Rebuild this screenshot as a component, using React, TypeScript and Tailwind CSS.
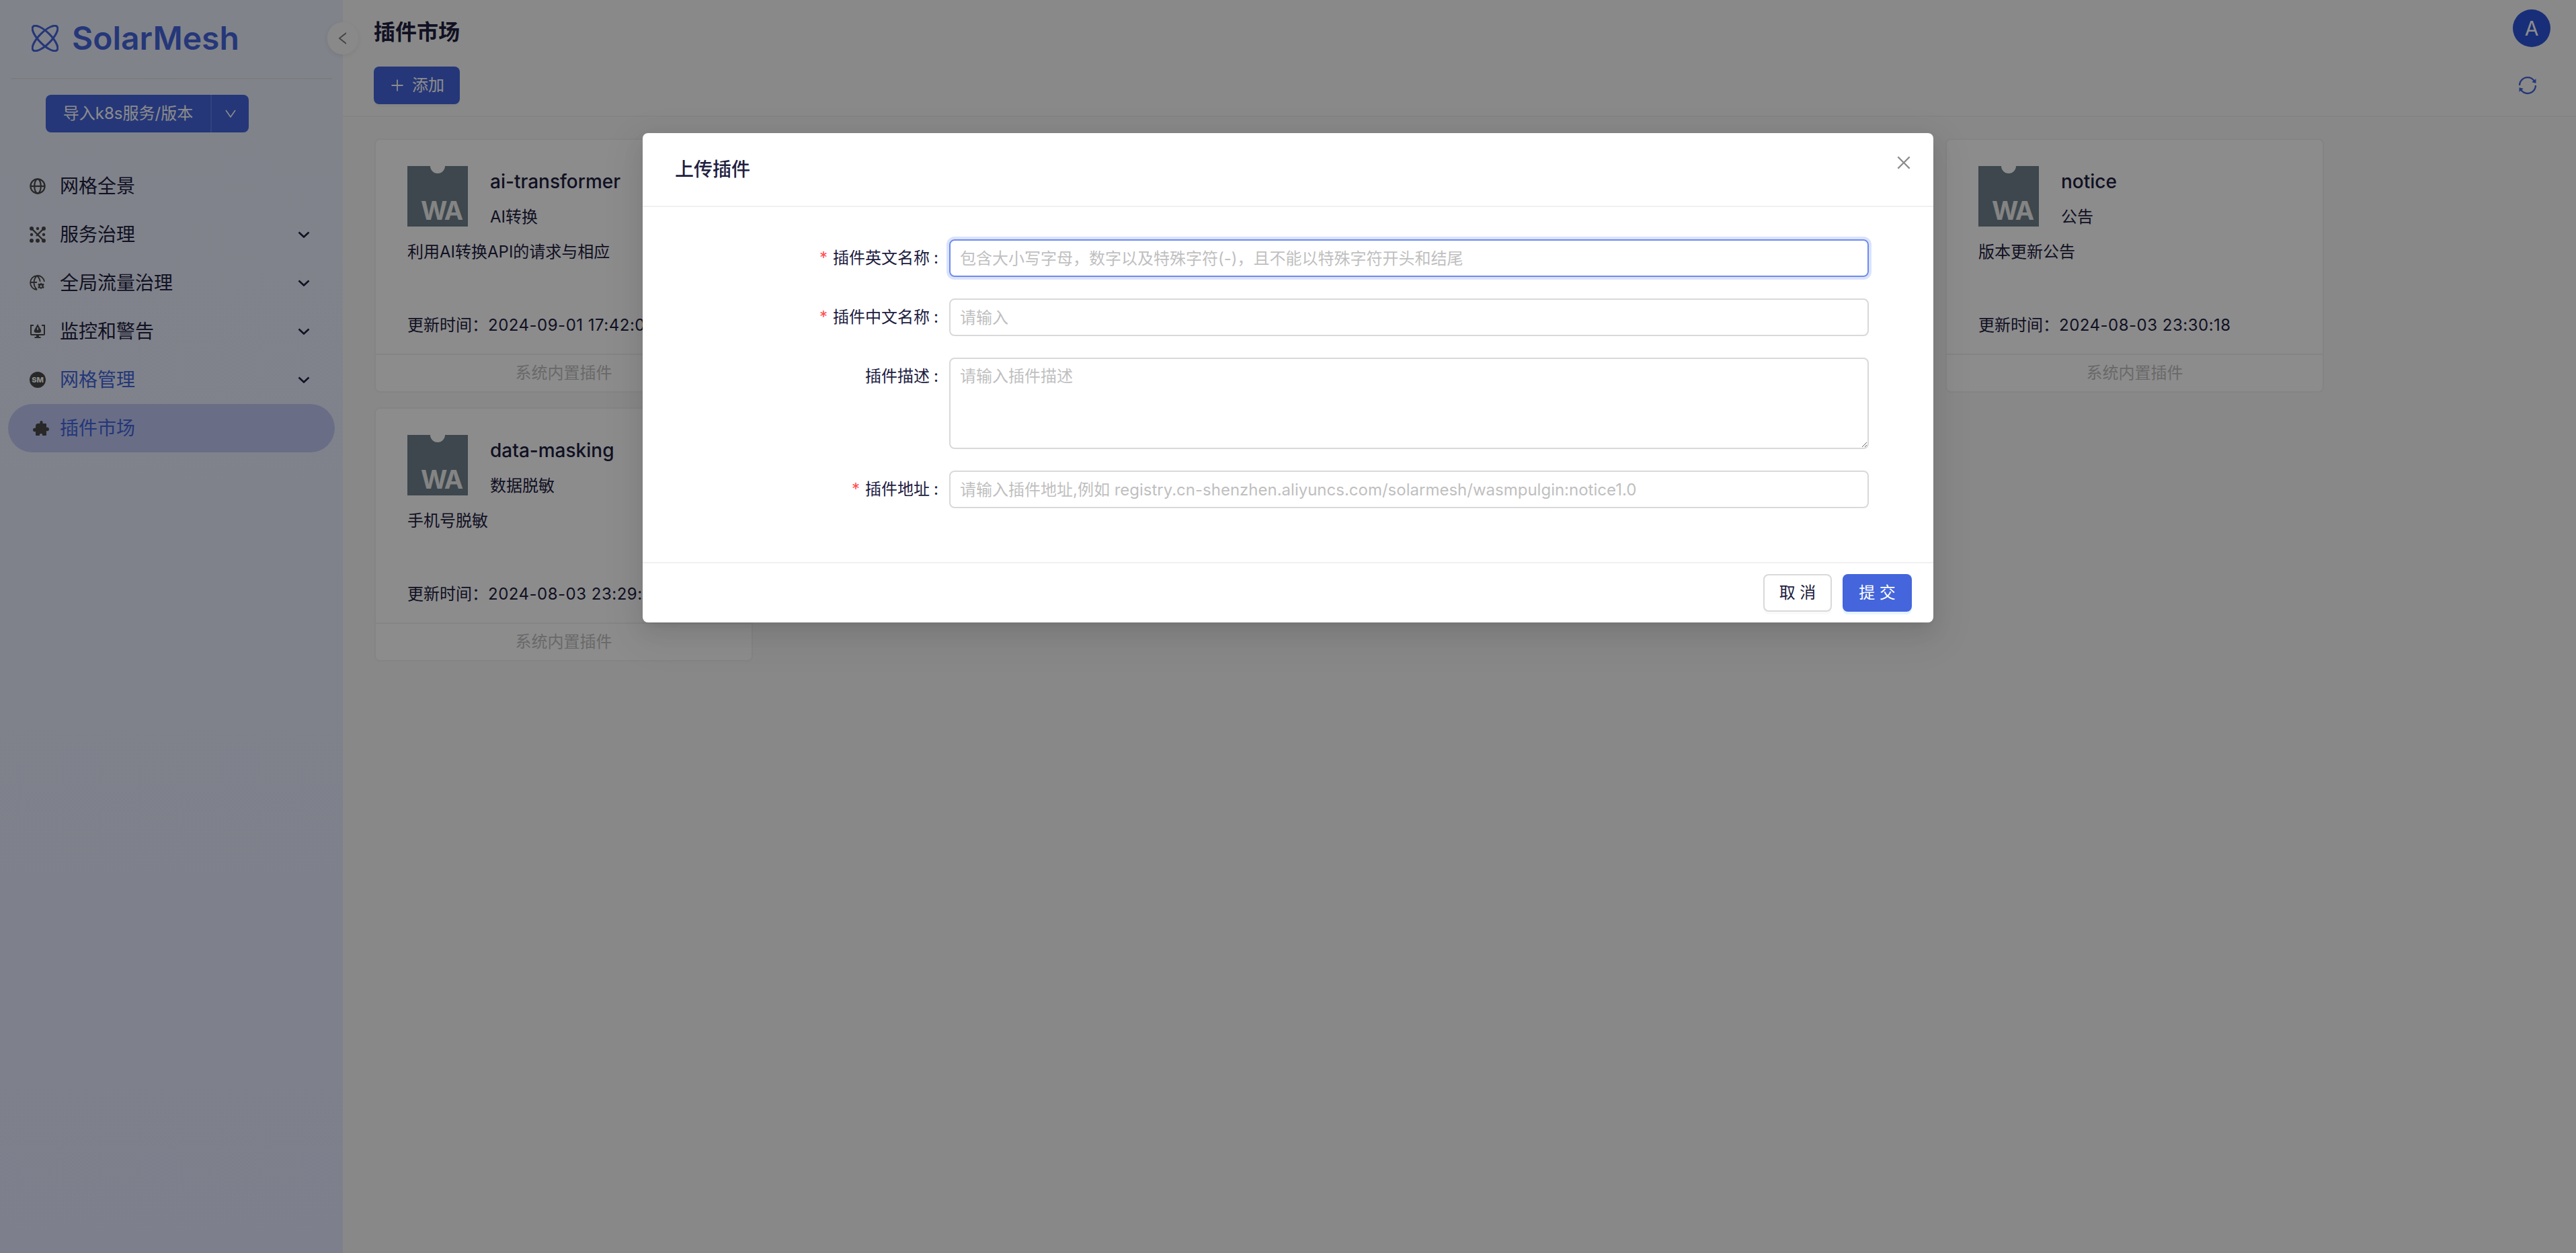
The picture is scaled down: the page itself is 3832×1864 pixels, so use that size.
/**
 * Plugin market page with the upload-plugin modal open over it.
 */
import type { ReactNode } from 'react'
import { AiOutlineClose, AiOutlineLeft, AiOutlinePlus, AiOutlineSync } from 'react-icons/ai'

const NAV = [
  { label: '网格全景', icon: <GlobeIcon /> },
  { label: '服务治理', icon: <ServiceIcon />, more: true },
  { label: '全局流量治理', icon: <TrafficIcon />, more: true },
  { label: '监控和警告', icon: <MonitorIcon />, more: true },
  { label: '网格管理', icon: <MeshIcon />, more: true, open: true },
  { label: '插件市场', icon: <PuzzleIcon />, active: true },
]

export default function App() {
  return (
    <div className="relative flex h-[1864px] w-full overflow-hidden bg-[#f7f7f7] font-['Inter','Noto_Sans_CJK_SC',sans-serif] text-[24px] text-[#20203f]">
      <Sidebar />

      <main className="min-w-0 flex-1">
        <header className="h-[174px] border-b-2 border-[#f0f0f0] bg-[#fafafa] pl-[46px] pr-[38px]">
          <div className="flex items-start justify-between pt-[14px]">
            <h1 className="mt-[14px] text-[32px] font-semibold leading-[40px]">插件市场</h1>
            <div className="grid h-14 w-14 place-items-center rounded-full bg-[#2d54da] text-[30px] text-white">A</div>
          </div>
          <div className="mt-[29px] flex items-center justify-between pr-[18px]">
            <button
              type="button"
              className="flex h-14 w-32 items-center justify-center gap-[10px] rounded-lg bg-[#4465dc] text-white shadow-[0_4px_0_rgba(0,0,0,0.02)]"
            >
              <AiOutlinePlus size={24} />
              添加
            </button>
            <AiOutlineSync size={32} className="text-[#4465dc]" />
          </div>
        </header>

        <div className="grid grid-cols-[repeat(5,563px)] gap-x-[21.25px] gap-y-[22px] pl-[47px] pt-8">
          <PluginCard name="ai-transformer" title="AI转换" desc="利用AI转换API的请求与相应" time="2024-09-01 17:42:08" />
          <div className="col-start-5">
            <PluginCard name="notice" title="公告" desc="版本更新公告" time="2024-08-03 23:30:18" />
          </div>
          <div className="col-start-1">
            <PluginCard name="data-masking" title="数据脱敏" desc="手机号脱敏" time="2024-08-03 23:29:38" />
          </div>
        </div>
      </main>

      <button
        type="button"
        className="absolute left-[487px] top-[33px] grid h-12 w-[46px] place-items-center rounded-full bg-[#fafafa] text-[#7a7a7a] shadow-[0_2px_8px_rgba(0,0,0,0.08)]"
      >
        <AiOutlineLeft size={24} />
      </button>

      <UploadModal />
    </div>
  )
}

function Sidebar() {
  return (
    <aside className="h-full w-[510px] shrink-0 bg-gradient-to-b from-[#ebeffc] to-[#e4eaff]">
      <div className="flex h-[116px] items-center gap-[20px] pb-[3px] pl-[47px]">
        <LogoIcon />
        <span className="text-[48px] font-semibold leading-none text-[#4465dc]">SolarMesh</span>
      </div>
      <div className="mx-4 border-t-2 border-[#dfe2e8]" />

      <div className="ml-[68px] mt-[23px] flex h-14 w-[302px] overflow-hidden rounded-lg bg-[#4465dc] text-white">
        <span className="flex w-[247px] items-center justify-center border-r-2 border-[#5a78e6]">导入k8s服务/版本</span>
        <span className="flex flex-1 items-center justify-center">
          <svg width="16" height="12" viewBox="0 0 16 12" fill="none" stroke="currentColor" strokeWidth="1.6">
            <path d="M1 1l7 10 7-10" />
          </svg>
        </span>
      </div>

      <nav className="mt-[44px]">
        {NAV.map((item) => (
          <div
            key={item.label}
            className={`mx-3 flex h-[72px] items-center rounded-full pl-[32px] pr-[37px] text-[28px] ${
              item.active ? 'bg-[#bfc9f5] text-[#4465dc]' : item.open ? 'text-[#4465dc]' : 'text-[#20203f]'
            }`}
          >
            <span className="mr-[21px] h-6 w-6 shrink-0 text-[#4a4a4a]">{item.icon}</span>
            <span className="flex-1">{item.label}</span>
            {item.more && (
              <svg width="18" height="10" viewBox="0 0 18 10" fill="none" stroke="#20203f" strokeWidth="2.6">
                <path d="M1.5 1.5L9 8.5l7.5-7" />
              </svg>
            )}
          </div>
        ))}
      </nav>
    </aside>
  )
}

function PluginCard({ name, title, desc, time }: { name: string; title: string; desc: string; time: string }) {
  return (
    <div className="h-[378px] rounded-lg border-2 border-[#f0f0f0] bg-white">
      <div className="flex h-[318px] flex-col px-[47px] pb-[24px] pt-[39px]">
        <div className="flex gap-[33px]">
          <WasmIcon />
          <div>
            <p className="mt-[5px] text-[28px] font-medium leading-[36px]">{name}</p>
            <p className="mt-[17px] leading-[36px]">{title}</p>
          </div>
        </div>
        <p className="mt-[16px] leading-[36px]">{desc}</p>
        <p className="mt-auto whitespace-nowrap leading-[36px]">
          更新时间：<span className="tracking-[0.5px]">{time}</span>
        </p>
      </div>
      <div className="flex h-[56px] items-center justify-center border-t-2 border-[#f0f0f0] text-[#bfbfbf]">系统内置插件</div>
    </div>
  )
}

function UploadModal() {
  return (
    <div className="absolute inset-0 flex justify-center bg-black/45 pt-[198px]">
      <div className="relative h-[728px] w-[1920px] rounded-lg bg-white shadow-[0_12px_32px_0_rgba(0,0,0,0.08),0_6px_12px_-8px_rgba(0,0,0,0.12),0_18px_56px_16px_rgba(0,0,0,0.05)]">
        <div className="flex h-[110px] items-center border-b-2 border-[#f0f0f0] pl-[48px] text-[28px] font-medium">上传插件</div>
        <AiOutlineClose size={28} className="absolute right-[30px] top-[30px] text-[#8c8c8c]" />

        <div className="flex h-[528px] flex-col gap-8 pl-[456px] pr-[96px] pt-[48px]">
          <FormRow label="插件英文名称" required>
            <input
              placeholder="包含大小写字母，数字以及特殊字符(-)，且不能以特殊字符开头和结尾"
              className="h-14 w-full rounded-lg border-2 border-[#6d8bf0] px-[14px] outline-none ring-4 ring-[#dbe3fb] placeholder:text-[#bfbfbf]"
            />
          </FormRow>
          <FormRow label="插件中文名称" required>
            <input
              placeholder="请输入"
              className="h-14 w-full rounded-lg border-2 border-[#d9d9d9] px-[14px] outline-none placeholder:text-[#bfbfbf]"
            />
          </FormRow>
          <FormRow label="插件描述">
            <textarea
              placeholder="请输入插件描述"
              className="block h-[136px] w-full resize-y rounded-lg border-2 border-[#d9d9d9] px-[14px] py-[8px] leading-[36px] outline-none placeholder:text-[#bfbfbf]"
            />
          </FormRow>
          <FormRow label="插件地址" required>
            <input
              placeholder="请输入插件地址,例如 registry.cn-shenzhen.aliyuncs.com/solarmesh/wasmpulgin:notice1.0"
              className="h-14 w-full rounded-lg border-2 border-[#d9d9d9] px-[14px] outline-none placeholder:text-[#bfbfbf]"
            />
          </FormRow>
        </div>

        <div className="flex h-[90px] items-center justify-end gap-4 border-t-2 border-[#f0f0f0] pr-8">
          <button
            type="button"
            className="h-14 w-[102px] rounded-lg border-2 border-[#d9d9d9] bg-white shadow-[0_4px_0_rgba(0,0,0,0.02)]"
          >
            取 消
          </button>
          <button type="button" className="h-14 w-[103px] rounded-lg bg-[#4465dc] text-white shadow-[0_4px_0_rgba(5,145,255,0.1)]">
            提 交
          </button>
        </div>
      </div>
    </div>
  )
}

function FormRow({ label, required, children }: { label: string; required?: boolean; children: ReactNode }) {
  return (
    <div className="relative flex">
      <label className="absolute right-[calc(100%+16px)] flex h-14 items-center whitespace-nowrap">
        {required && <span className="mr-[8px] text-[#ff4d4f]">*</span>}
        {label}
        <span className="ml-[6px]">:</span>
      </label>
      <div className="flex-1">{children}</div>
    </div>
  )
}

function WasmIcon() {
  return (
    <svg width="90" height="90" viewBox="0 0 90 90" className="shrink-0">
      <path d="M0 0h34a11 11 0 0 0 22 0h34v90H0Z" fill="#6f828d" />
      <text x="20" y="80" fontSize="38" fontWeight="700" letterSpacing="-2" fill="#f0f0f0">
        WA
      </text>
    </svg>
  )
}

function LogoIcon() {
  return (
    <svg width="40" height="40" viewBox="0 0 40 40" fill="none" stroke="#4465dc" strokeWidth="3" className="shrink-0">
      <ellipse cx="20" cy="20" rx="9" ry="25" transform="rotate(45 20 20)" />
      <ellipse cx="20" cy="20" rx="9" ry="25" transform="rotate(-45 20 20)" />
    </svg>
  )
}

function GlobeIcon() {
  return (
    <svg viewBox="0 0 24 24" fill="none" stroke="currentColor" strokeWidth="2.2">
      <circle cx="12" cy="12" r="10.6" />
      <ellipse cx="12" cy="12" rx="4.8" ry="10.6" />
      <path d="M1.4 12h21.2" />
    </svg>
  )
}

function ServiceIcon() {
  return (
    <svg viewBox="0 0 24 24" fill="currentColor" stroke="currentColor" strokeWidth="2.4">
      <path d="M3 3l18 18M21 3L10 14" fill="none" />
      <circle cx="3" cy="3" r="1.8" />
      <circle cx="21" cy="3" r="1.8" />
      <circle cx="12" cy="3" r="1" />
      <circle cx="3" cy="12" r="1" />
      <circle cx="21" cy="12" r="1" />
      <circle cx="3" cy="21" r="1.8" />
      <circle cx="12" cy="21" r="1.8" />
      <circle cx="21" cy="21" r="1.8" />
    </svg>
  )
}

function TrafficIcon() {
  return (
    <svg viewBox="0 0 24 24" fill="none" stroke="currentColor" strokeWidth="1.8">
      <path d="M11 22A10.500 10.500 0 1 1 22 10M1 11h10M11 1c-6 6-6 15 0 21M11 1c3 3 4.500 6 4.700 9" />
      <path d="M17 11.500l1.500 1.700 2.200-.5 1 2-1.500 1.600 1.500 1.700-1 2-2.200-.5-1.500 1.700-1.500-1.700-2.200.5-1-2 1.500-1.700-1.500-1.600 1-2 2.200.5z" fill="currentColor" stroke="none" />
      <circle cx="17" cy="16.800" r="1.500" fill="#e9edf5" stroke="none" />
    </svg>
  )
}

function MonitorIcon() {
  return (
    <svg viewBox="0 0 24 24" fill="none" stroke="currentColor" strokeWidth="2">
      <path d="M6 3H2v13a1 1 0 0 0 1 1h18a1 1 0 0 0 1-1V3h-4" />
      <path d="M12 1l5 9a3 3 0 0 1-2 4H9a3 3 0 0 1-2-4Z" fill="currentColor" stroke="none" />
      <path d="M12 6v4" stroke="#e9edf5" strokeWidth="1.600" />
      <path d="M10 17v3H7.500v2h9v-2H14v-3Z" fill="currentColor" stroke="none" />
    </svg>
  )
}

function MeshIcon() {
  return (
    <svg viewBox="0 0 24 24">
      <circle cx="12" cy="12" r="12" fill="currentColor" />
      <text x="12" y="16" textAnchor="middle" fontSize="11" fontWeight="800" fill="#ffffff">
        SM
      </text>
    </svg>
  )
}

function PuzzleIcon() {
  return (
    <svg viewBox="0 0 24 24" fill="currentColor" className="translate-x-[5px] translate-y-[1px]">
      <path d="M8 4h2.500C9.800 1.500 11 0 12.500 0S15.200 1.500 14.500 4H19a1 1 0 0 1 1 1v5c2.500-.8 4 .5 4 2.500S22.500 16 20 15v6a1 1 0 0 1-1 1h-5c.5-2-.5-3-2-3s-2.500 1-2 3H5a1 1 0 0 1-1-1v-5c-2.500.7-4-.5-4-2.500S1.500 10.300 4 11V8a4 4 0 0 1 4-4Z" />
    </svg>
  )
}
